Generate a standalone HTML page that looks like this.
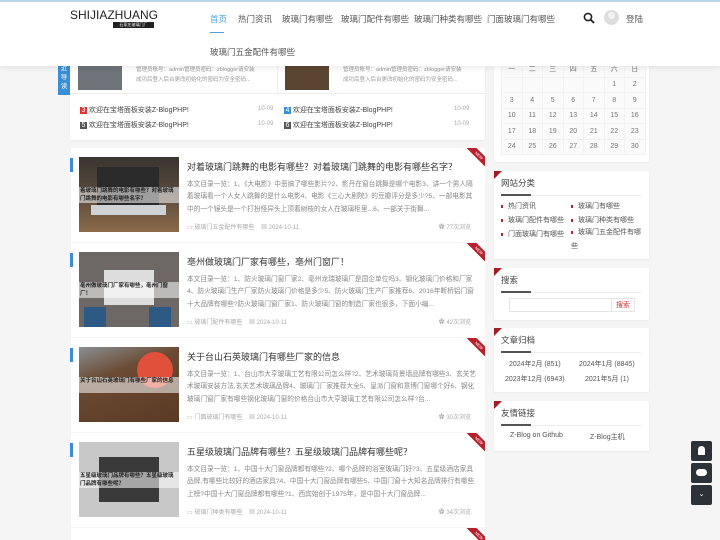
<!DOCTYPE html>
<html style="overflow:hidden;width:720px;height:540px"><head><meta charset="utf-8"><style>
*{margin:0;padding:0;box-sizing:border-box}
body{width:720px;height:540px;overflow:hidden;background:#f5f5f5;font-family:"Liberation Sans","Noto Sans CJK SC",sans-serif;color:#333;position:relative}
.a{position:absolute}
.hdr{left:0;top:0;width:720px;height:66px;background:#fff;box-shadow:0 2px 6px rgba(0,0,0,.08);z-index:5;border-top:2px solid #b9d3ea}
.nav{font-size:8.5px;color:#555}
.box{background:#fff;border-radius:2px;box-shadow:0 1px 2px rgba(0,0,0,.05)}
.card{left:71px;width:414px;height:94px;background:#fff}
.img{left:8px;top:9px;width:100px;height:75px;overflow:hidden}
.img span{position:absolute;left:0;top:30px;width:100px;height:16px;background:rgba(255,255,255,.55);font-size:5.5px;font-weight:bold;color:#222;line-height:8px;padding:0 1px}
.bar{left:-1px;top:10px;width:3px;height:14px;background:#3a8ed6}
.t{left:116px;top:12px;font-size:9px;color:#333;white-space:nowrap}
.d{left:116px;top:31px;width:290px;font-size:6.7px;line-height:12.3px;color:#888;height:37px;overflow:hidden}
.m{left:116px;top:74px;font-size:6px;color:#aaa}
.v{right:14px;top:74px;font-size:6px;color:#aaa}
.rib{right:0;top:0;width:20px;height:20px;overflow:hidden}
.rib i{position:absolute;left:-2px;top:4px;width:32px;height:7px;background:#b8202c;transform:rotate(45deg);font-size:4px;color:#fff;font-style:normal;text-align:center;line-height:7px}
.sh{left:7px;top:6px;font-size:8.5px;color:#444}
.sl{left:7px;top:24px;width:140px;height:1px;background:#eee}
.sl b{display:block;width:30px;height:2px;background:#555;margin-top:-1px}
.flag{left:0;top:0;width:0;height:0;border-top:8px solid #a01d26;border-right:8px solid transparent}
.cat{font-size:7px;color:#555}
.cat i{display:inline-block;width:2px;height:3px;background:#b8202c;margin-right:5px;vertical-align:middle}
.cal td{width:20.5px;height:15.5px;text-align:center;font-size:7px;color:#777;border:1px solid #f2f2f2;background:#fafafa}
.fb{left:691px;width:21px;height:20px;background:#2d3238;border-radius:2px}
</style></head><body>

<div class="a hdr">
  <div class="a" style="left:70px;top:6px;font-size:12px;color:#222">SHIJIAZHUANG</div>
  <div class="a" style="left:113px;top:20px;width:41px;height:6px;background:#222;color:#fff;font-size:4px;text-align:center;line-height:6px">石家庄玻璃门厂</div>
  <div class="a nav" style="left:210px;top:11px;color:#4aa3df">首页</div>
  <div class="a" style="left:210px;top:30px;width:14px;height:1px;background:#4aa3df"></div>
  <div class="a nav" style="left:238px;top:11px">热门资讯</div>
  <div class="a nav" style="left:282px;top:11px">玻璃门有哪些</div>
  <div class="a nav" style="left:341px;top:11px">玻璃门配件有哪些</div>
  <div class="a nav" style="left:414px;top:11px">玻璃门种类有哪些</div>
  <div class="a nav" style="left:487px;top:11px">门面玻璃门有哪些</div>
  <div class="a nav" style="left:210px;top:44px">玻璃门五金配件有哪些</div>
  <svg class="a" style="left:583px;top:10px" width="12" height="12" viewBox="0 0 12 12"><circle cx="5" cy="5" r="3.6" fill="none" stroke="#222" stroke-width="1.6"/><path d="M7.6 7.6L11 11" stroke="#222" stroke-width="1.8"/></svg>
  <div class="a" style="left:604px;top:8px;width:15px;height:15px;border-radius:50%;background:#ddd"></div>
  <div class="a" style="left:608px;top:10px;width:7px;height:7px;border-radius:50%;background:#f2f2f2"></div>
  <div class="a nav" style="left:626px;top:11px">登陆</div>
</div>

<div class="a" style="left:58px;top:62px;width:12px;height:33px;background:#3a8ed6;color:#fff;font-size:6.5px;line-height:9px;text-align:center;padding-top:2px">近<br>导<br>读</div>
<div class="a box" style="left:70px;top:55px;width:415px;height:85px">
  <div class="a" style="left:8px;top:5px;width:44px;height:30px;background:#6d7378"></div>
  <div class="a" style="left:66px;top:10px;font-size:5.5px;color:#999;line-height:10px">管理员账号：admin管理员密码：zblogger请安装<br>成功后登入后台更改初始化的密码为安全密码...</div>
  <div class="a" style="left:215px;top:5px;width:44px;height:30px;background:#5a4530"></div>
  <div class="a" style="left:273px;top:10px;font-size:5.5px;color:#999;line-height:10px">管理员账号：admin管理员密码：zblogger请安装<br>成功后登入后台更改初始化的密码为安全密码...</div>
  <div class="a" style="left:0;top:38px;width:415px;height:1px;background:#eee"></div>
  <div class="a" style="left:207px;top:5px;width:1px;height:33px;background:#eee"></div>
  <div class="a" style="left:10px;top:50px;font-size:7px;color:#444"><span style="background:#d33;color:#fff;padding:0 1.5px">3</span> 欢迎在宝塔面板安装Z-BlogPHP!</div>
  <div class="a" style="left:188px;top:51px;font-size:6px;color:#aaa">10-09</div>
  <div class="a" style="left:214px;top:50px;font-size:7px;color:#444"><span style="background:#3a8ed6;color:#fff;padding:0 1.5px">4</span> 欢迎在宝塔面板安装Z-BlogPHP!</div>
  <div class="a" style="left:384px;top:51px;font-size:6px;color:#aaa">10-09</div>
  <div class="a" style="left:10px;top:65px;font-size:7px;color:#444"><span style="background:#555;color:#fff;padding:0 1.5px">5</span> 欢迎在宝塔面板安装Z-BlogPHP!</div>
  <div class="a" style="left:188px;top:66px;font-size:6px;color:#aaa">10-09</div>
  <div class="a" style="left:214px;top:65px;font-size:7px;color:#444"><span style="background:#555;color:#fff;padding:0 1.5px">6</span> 欢迎在宝塔面板安装Z-BlogPHP!</div>
  <div class="a" style="left:384px;top:66px;font-size:6px;color:#aaa">10-09</div>
</div>

<div class="a card" style="top:148px"><div class="a bar"></div><div class="a img" style="background:linear-gradient(180deg,#3a3530 0,#5a4a3c 50%,#8a6a4a 100%)"><div class="a" style="left:18px;top:10px;width:62px;height:40px;background:#2a2a2a"></div><div class="a" style="left:12px;top:48px;width:75px;height:10px;background:#cfd2d4"></div><span>着玻璃门跳舞的电影有哪些？对着玻璃门跳舞的电影有哪些名字？</span></div>
<div class="a t">对着玻璃门跳舞的电影有哪些？对着玻璃门跳舞的电影有哪些名字？</div>
<div class="a d">本文目录一览：1、《大电影》中恶搞了哪些影片?2、影丹在窗台跳舞是哪个电影3、讲一个男人隔着玻璃看一个人女人跳舞的是什么电影4、电影《三心大剧院》的豆瓣评分是多少?5、一部电影其中的一个镜头是一个打扮怪异头上顶着树枝的女人在玻璃柜里...6、一部关于街舞...</div>
<div class="a m">▭ 玻璃门五金配件有哪些 &nbsp;&nbsp; ▦ 2024-10-11</div><div class="a v">✿ 77次浏览</div><div class="a rib"><i>NEW</i></div></div>

<div class="a card" style="top:243px"><div class="a bar"></div><div class="a img" style="background:#6d6766"><div class="a" style="left:25px;top:18px;width:50px;height:35px;background:#ddd"></div><div class="a" style="left:5px;top:55px;width:22px;height:20px;background:#2d5a85"></div><div class="a" style="left:70px;top:55px;width:22px;height:20px;background:#2d5a85"></div><span>亳州做玻璃门厂家有哪些，亳州门窗厂！</span></div>
<div class="a t">亳州做玻璃门厂家有哪些，亳州门窗厂！</div>
<div class="a d">本文目录一览：1、防火玻璃门窗厂家2、亳州龙瑞玻璃厂是国企单位吗3、钢化玻璃门价格和厂家4、防火玻璃门生产厂家防火玻璃门价格是多少5、防火玻璃门生产厂家推荐6、2016年断桥铝门窗十大品牌有哪些?防火玻璃门窗厂家1、防火玻璃门窗的制造厂家也很多，下面小编...</div>
<div class="a m">▭ 玻璃门配件有哪些 &nbsp;&nbsp; ▦ 2024-10-11</div><div class="a v">✿ 42次浏览</div><div class="a rib"><i>NEW</i></div></div>

<div class="a card" style="top:338px"><div class="a bar"></div><div class="a img" style="background:linear-gradient(160deg,#8a8e92 0,#6a4a32 35%,#5a3a24 100%)"><div class="a" style="left:58px;top:5px;width:36px;height:36px;border-radius:50%;background:#e0503a"></div><span>关于台山石英玻璃门有哪些厂家的信息</span></div>
<div class="a t">关于台山石英玻璃门有哪些厂家的信息</div>
<div class="a d">本文目录一览：1、台山市大亨玻璃工艺有限公司怎么样?2、艺术玻璃背景墙品牌有哪些3、玄关艺术玻璃安装方法,玄关艺术玻璃品牌4、玻璃门厂家推荐大全5、皇派门窗和意博门窗哪个好6、钢化玻璃门窗厂家有哪些钢化玻璃门窗的价格台山市大亨玻璃工艺有限公司怎么样?台...</div>
<div class="a m">▭ 门面玻璃门有哪些 &nbsp;&nbsp; ▦ 2024-10-11</div><div class="a v">✿ 30次浏览</div><div class="a rib"><i>NEW</i></div></div>

<div class="a card" style="top:433px"><div class="a bar"></div><div class="a img" style="background:#c8c8c8"><div class="a" style="left:20px;top:15px;width:60px;height:45px;background:#3a3a3a"></div><span>五星级玻璃门品牌有哪些？五星级玻璃门品牌有哪些呢？</span></div>
<div class="a t">五星级玻璃门品牌有哪些？五星级玻璃门品牌有哪些呢？</div>
<div class="a d">本文目录一览：1、中国十大门窗品牌都有哪些?2、哪个品牌的浴室玻璃门好?3、五星级酒店家具品牌,有哪些比较好的酒店家具?4、中国十大门窗品牌有哪些5、中国门窗十大知名品牌排行有哪些上榜?中国十大门窗品牌都有哪些?1、西宾始创于1975年，是中国十大门窗品牌...</div>
<div class="a m">▭ 玻璃门种类有哪些 &nbsp;&nbsp; ▦ 2024-10-11</div><div class="a v">✿ 34次浏览</div><div class="a rib"><i>NEW</i></div></div>

<div class="a card" style="top:528px;height:12px"><div class="a rib"><i>NEW</i></div></div>

<div class="a box" style="left:494px;top:55px;width:155px;height:107px">
<table class="a cal" style="left:7px;top:6px;border-collapse:collapse">
<tr><td>一</td><td>二</td><td>三</td><td>四</td><td>五</td><td>六</td><td>日</td></tr>
<tr><td></td><td></td><td></td><td></td><td></td><td>1</td><td>2</td></tr>
<tr><td>3</td><td>4</td><td>5</td><td>6</td><td>7</td><td>8</td><td>9</td></tr>
<tr><td>10</td><td>11</td><td>12</td><td>13</td><td>14</td><td>15</td><td>16</td></tr>
<tr><td>17</td><td>18</td><td>19</td><td>20</td><td>21</td><td>22</td><td>23</td></tr>
<tr><td>24</td><td>25</td><td>26</td><td>27</td><td>28</td><td>29</td><td>30</td></tr>
</table></div>

<div class="a box" style="left:494px;top:171px;width:155px;height:88px"><div class="a flag"></div><div class="a sh">网站分类</div><div class="a sl"><b></b></div>
<div class="a cat" style="left:7px;top:30px"><i></i>热门资讯</div><div class="a cat" style="left:77px;top:30px"><i></i>玻璃门有哪些</div>
<div class="a cat" style="left:7px;top:44px"><i></i>玻璃门配件有哪些</div><div class="a cat" style="left:77px;top:44px"><i></i>玻璃门种类有哪些</div>
<div class="a cat" style="left:7px;top:58px"><i></i>门面玻璃门有哪些</div><div class="a cat" style="left:77px;top:58px;width:75px;line-height:14px;margin-top:-3px"><i></i>玻璃门五金配件有哪些</div></div>

<div class="a box" style="left:494px;top:268px;width:155px;height:52px"><div class="a flag"></div><div class="a sh">搜索</div><div class="a sl"><b></b></div>
<div class="a" style="left:15px;top:30px;width:126px;height:14px;border:1px solid #e5e5e5"></div>
<div class="a" style="left:117px;top:30px;width:1px;height:14px;background:#e5e5e5"></div>
<div class="a" style="left:122px;top:32px;font-size:7px;color:#c33">搜索</div></div>

<div class="a box" style="left:494px;top:328px;width:155px;height:64px"><div class="a flag"></div><div class="a sh">文章归档</div><div class="a sl"><b></b></div>
<div class="a cat" style="left:15px;top:31px">2024年2月 (851)</div><div class="a cat" style="left:85px;top:31px">2024年1月 (8845)</div>
<div class="a cat" style="left:11px;top:46px">2023年12月 (6943)</div><div class="a cat" style="left:91px;top:46px">2021年5月 (1)</div></div>

<div class="a box" style="left:494px;top:401px;width:155px;height:50px"><div class="a flag"></div><div class="a sh">友情链接</div><div class="a sl"><b></b></div>
<div class="a cat" style="left:16px;top:31px">Z-Blog on Github</div><div class="a cat" style="left:96px;top:31px">Z-Blog主机</div></div>

<div class="a fb" style="top:441px"><div class="a" style="left:7px;top:5px;width:7px;height:9px;border-radius:4px 4px 1px 1px;background:#fff"></div></div>
<div class="a fb" style="top:463px"><div class="a" style="left:5px;top:6px;width:11px;height:7px;border-radius:4px;background:#fff"></div></div>
<div class="a fb" style="top:485px;color:#fff;font-size:7px;text-align:center;line-height:20px">⌄</div>
</body></html>
